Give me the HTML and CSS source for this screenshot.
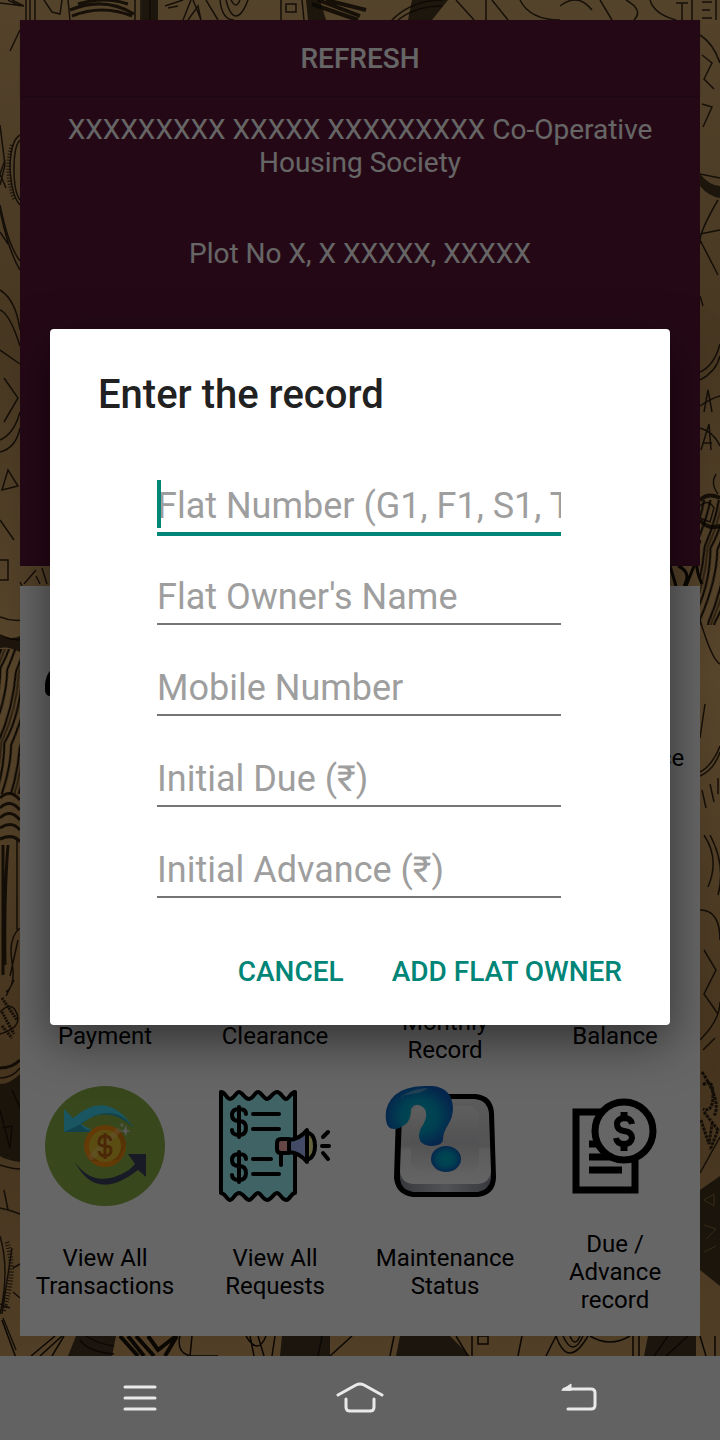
FILE: index.html
```html
<!DOCTYPE html>
<html lang="en">
<head>
<meta charset="utf-8">
<meta name="viewport" content="width=device-width, initial-scale=1">
<title>Enter the record</title>
<link rel="stylesheet" href="styles.css">
</head>
<body>
<div class="screen">
  <svg class="coins" viewBox="0 0 720 1356" preserveAspectRatio="xMidYMid slice" aria-hidden="true">
    <defs>
      <linearGradient id="gold" x1="0" y1="0" x2="0" y2="1">
        <stop offset="0" stop-color="#d3a86c"/><stop offset=".25" stop-color="#b38b55"/><stop offset=".5" stop-color="#dcae6e"/><stop offset=".8" stop-color="#ad824c"/><stop offset="1" stop-color="#c89c60"/>
      </linearGradient>
      <pattern id="folds" width="22" height="72" patternUnits="userSpaceOnUse" patternTransform="rotate(14)">
        <path d="M2 0Q8 36 2 72M8 0Q17 38 8 72M15 0Q22 30 15 72" fill="none" stroke="#1c1208" stroke-width="2"/>
        <path d="M5 0Q12 36 5 72" fill="none" stroke="#70512c" stroke-width="2"/>
      </pattern>
    </defs>
    <rect width="720" height="1356" fill="url(#gold)"/>
    <path d="M142 0h16v20h-16zM306 0h14l6 20h-18zM412 0h36l-16 20h-24zM0 636q12 4 20 0v16q-12-6-20-4z" fill="#1c1208" opacity=".75"/>
    <path d="M700 174q10 12 20 12v12q-12-2-20-12zM700 1190l20-14v110l-20-16zM0 1084q10 0 20-10v88q-14-2-20-6z" fill="#302414" opacity=".85"/>
    <rect y="649" width="20" height="145" fill="url(#folds)"/>
    <rect x="700" y="500" width="20" height="125" fill="url(#folds)"/>
    <g fill="none" stroke="#1c1208" stroke-width="1.5" opacity=".85">
      <path d="M0 3l24 3-12-6M8 0l12 6M26 0v20M35 0v20M30 0v20M44 0l8 12 8 2 2-14M68 0l2 20M135 0v20M141 0v20M150 0v20"/>
      <path d="M70 10q34-14 64 4M72 16q30-12 60 0M78 4q26-8 50 0" stroke-width="3"/>
      <path d="M165 6l18-6M168 8l10-2M183 20l8-20M188 20l10-14 3 14M206 0l12 20M193 0l8 20"/>
      <path d="M220 0q2 20 14 20M226 0q4 16 10 16t12-16M231 0q5 10 9 0M281 0v20M302 0l2 20M286 4h10v8h-10z"/>
      <path d="M318 0l42 16M326 0l40 10M312 4l46 16" stroke-width="4"/>
      <path d="M392 20q20-20 50-20M398 20q18-14 44-14M456 0l18 20M486 20V0M492 0l16 20M520 0q10 20 40 20M560 6q18-14 32 4M600 0l12 20M626 0q18 10 8 20M650 0q4 14 26 20M676 3h12M682 3v17M692 0v20M702 2h10M702 18h10M702 10h8M716 0v20"/>
      <path d="M20 30L10 51M0 125l5 40-5 20M0 205q8 40 20 56M0 210q8 40 20 60M0 232l8 12"/>
      <path d="M20 135q-10 6-10 34 2 28 10 36M20 140q-6 6-6 29t6 31M5 160l-5 14 6 14"/>
      <path d="M12 145q-8 26 2 54" stroke-width="4" stroke-dasharray="1 2"/>
      <path d="M0 290q16 10 20 40M0 310q10 4 20 36M0 350l20 14M4 378l14 20-14 24M0 440q14-6 20-28M0 452q16-4 20-24M8 470l-6 20 16-4zM0 520l14 20M0 560h8v20H0"/>
      <path d="M0 617q24 10 50-8M0 635q10 5 20 5M20 582l4 8M24 584l12-14M36 576l4 8M42 568l5 16"/>
      <path d="M0 798q10-10 20 2M0 808q10-10 20 2M0 818q10-10 20 2M0 828q12-8 20 2M0 839q14-6 20 3" stroke-width="3"/>
      <path d="M3 845v130M8 845q-4 50-3 120" stroke-width="3"/>
      <path d="M17 840v90M20 928q-12 10-8 34t-6 30M18 940q-4 18-8 36M14 980l-8 16M0 1012q12-12 17 2t-17 20"/>
      <path d="M2 998l15 22M2 1012l12 22M2 1026l10 12" stroke-width="3" stroke-dasharray="2 1"/>
      <path d="M0 1068q12 0 20-8" stroke-width="3"/>
      <path d="M0 1078q12 0 20-10M0 1110l10 38 2-22-10 2M12 1090l8 18M0 1165q12 4 20 4M0 1208q10 2 20 6M4 1190l4 20"/>
      <path d="M0 1236q10 34 0 78M12 1248l-10 66M13 1268l7-4M13 1292l7 6M10 1308l-10-4M3 1318l13 32"/>
      <path d="M7 1242q10 30-4 70" stroke-width="5" stroke-dasharray="1 2"/>
      <path d="M700 35q13 8 20 28M702 55l10 8-8 16 10 10M702 104l10 3-9 20M700 174l20 4M718 200q-20 34-18 44M700 234l20-4M700 240l18 35M700 296l3 10M700 372q14-6 20-28M700 380q16-8 20-24M704 412l4-22 4 22M700 406q12-8 20-10"/>
      <path d="M700 428q14 4 20 18M701 450l8-26 2 26M703 443h9M716 474q-6 10 2 20M700 506q8-8 14 2l-4 14-10-4"/>
      <path d="M700 500q8-8 20-2M700 520q8 10 20 6" stroke-width="4"/>
      <path d="M700 620q12 40 20 44M705 704l-5 34M700 772q12-6 20-26M700 776q14-6 20-24M702 790l4 18M710 784l4 18M718 778v16"/>
      <path d="M704 835q16 24 4 52M710 835q16 30 8 60M700 910q20 0 20 30M704 950l12 20-12 24 14 20M700 1040q20-20 20-38M703 1050l12-12M700 1173l20-36"/>
      <path d="M702 1072q20 30 12 44M703 1085q10-8 10 10t-10 14M704 1112l14 18-8 20M701 1120l8 24 3-20" stroke-width="3" stroke-dasharray="3 1"/>
    </g>
    <path d="M704 1200l10-6v12zM704 1225l12 4-10 10M704 1252l12-6" fill="none" stroke="#8b683b"/>
    <path d="M76 1336h40l-4 20H68zM282 1336h48v20h-50zM400 1336h50l20 20h-74zM648 1336h48v20h-52z" fill="#2e2416" opacity=".85"/>
    <path d="M120 1336l18 20M128 1336l16 20M136 1336l18 20M148 1336l10 14 18-14M165 1356l12-20" fill="none" stroke="#1c1208" stroke-width="4"/>
    <path d="M2 1320l14 38M31 1356l24-20M40 1356l22-20M52 1356l12-20M80 1340q8 12 34 14M86 1336q12 8 28 10M180 1336q-4 16 10 20h28M192 1336l-2 20M246 1336q12 20 20 0M250 1336l4 20M258 1336l6 20M275 1336l-3 20M322 1336l-4 20M352 1336l-22 20M394 1336l-4 20M456 1336l12 20M472 1336v20M478 1336h10v8h-10zM518 1356l4-20M546 1356l10-20M556 1336q12 34 32 0M563 1336q10 22 20 0M570 1336q5 12 10 0M590 1336q20 12 40 0M633 1336v20M639 1336v20M654 1356l14-20M666 1356l22-20M700 1336l6 20M715 1336v20" fill="none" stroke="#1c1208" stroke-width="1.5"/>
    <path d="M670 566l6 20M678 566q14 6 6 20M694 566l-8 20M700 540q-8 24 2 44" fill="none" stroke="#1c1208" stroke-width="3"/>
  </svg>

  <header class="society">
    <button class="refresh" type="button">REFRESH</button>
    <p class="society-line">XXXXXXXXX XXXXX XXXXXXXXX Co-Operative Housing Society</p>
    <p class="society-line address">Plot No X, X XXXXX, XXXXX</p>
  </header>

  <main class="menu">
    <div class="tile">
      <svg class="tile-icon" viewBox="0 0 120 120" aria-hidden="true"><path d="M20 77Q2 80 0 98v7q1 5 5 5h15z"/></svg>
    </div>
    <div class="tile"></div>
    <div class="tile"></div>
    <div class="tile"><span class="tile-icon"></span><span class="tile-label">Maintenance<br>&nbsp;</span></div>

    <div class="tile"><span class="tile-icon"></span><span class="tile-label">&nbsp;<br>Payment</span></div>
    <div class="tile"><span class="tile-icon"></span><span class="tile-label">&nbsp;<br>Clearance</span></div>
    <div class="tile"><span class="tile-icon"></span><span class="tile-label">&nbsp;<br>Monthly<br>Record</span></div>
    <div class="tile"><span class="tile-icon"></span><span class="tile-label">&nbsp;<br>Balance</span></div>

    <a class="tile" href="#transactions">
      <svg class="tile-icon" viewBox="0 0 120 120" aria-hidden="true">
        <circle cx="60" cy="60" r="60" fill="#8cb148"/>
        <path d="M19 23l9 9Q62 2 89 42 67 14 36 38l14 8H19z" fill="#41d8f4"/>
        <path d="M19 46l17-8Q67 14 89 42 63 17 35 38l5 5 10 3z" fill="#2ba9c4"/>
        <path d="M30 76Q50 105 84 84l6-6-7-10h18v23l-8-7Q51 117 30 76z" fill="#3c4460"/>
        <circle cx="60" cy="60" r="21" fill="#f99310"/>
        <path d="M75 45a21 21 0 0 1 6 14L74 74 45 75z" fill="#d97f10"/>
        <circle cx="60" cy="60" r="16" fill="#e4c02c"/>
        <path d="M43 70l30-29 4 4-30 30z" fill="#ffd9a0" opacity=".35"/>
        <path d="M66 55q-1-5-6-5t-6 5 6 5 6 5-6 5-6-5M60 47v26" fill="none" stroke="#b86414" stroke-width="3"/>
        <path d="M81 39l1 5 4 1-4 1-1 4-2-4-4-1 4-1z" fill="#ddd"/>
        <path d="M77 37v4M75 39h4" fill="none" stroke="#ddd"/>
      </svg>
      <span class="tile-label">View All Transactions</span>
    </a>
    <a class="tile" href="#requests">
      <svg class="tile-icon" viewBox="0 0 120 120" aria-hidden="true">
        <g stroke="#000" stroke-width="4" stroke-linejoin="round" stroke-linecap="round" fill="none">
          <path d="M6 6c5 0 5 7 9 7s6-7 9-7 6 7 10 7 6-7 9-7 6 7 9 7 6-7 10-7 6 7 9 7 5-7 9-7v101c-4 0-5 7-9 7s-6-7-9-7-6 7-10 7-6-7-9-7-6 7-9 7-6-7-10-7-6 7-9 7-5-7-9-7z" fill="#a0faff"/>
          <path d="M31 28q0-5-7-5t-7 6 7 6 7 7-7 7-7-5M24 21v30M31 73q0-5-7-5t-7 6 7 6 7 7-7 7-7-5M24 66v30M38 28h26M38 43h26M38 73h18M38 88h26M66 68v11"/>
          <path d="M92 47h2q6 3 6 13t-6 13h-2z" fill="#fff89d"/>
          <path d="M74 54q11-1 18-10v32q-7-9-18-10z" fill="#a5b9ff"/>
          <path d="M74 53h-8q-4 0-4 4v6q0 4 4 4h8z" fill="#ffafac"/>
          <path d="M108 51l5-5M107 60h7M108 67l5 6"/>
        </g>
      </svg>
      <span class="tile-label">View All Requests</span>
    </a>
    <a class="tile" href="#status">
      <svg class="tile-icon" viewBox="0 0 120 120" aria-hidden="true">
        <defs>
          <linearGradient id="face" x1="0" y1="0" x2="0" y2="1"><stop offset="0" stop-color="#e4e4e4"/><stop offset=".55" stop-color="#d0d0d0"/><stop offset=".6" stop-color="#e8e8e8"/><stop offset="1" stop-color="#fafafa"/></linearGradient>
          <linearGradient id="well" x1="0" y1="0" x2="0" y2="1"><stop offset="0" stop-color="#eee"/><stop offset=".55" stop-color="#ccccd0"/><stop offset="1" stop-color="#f0f0f0"/></linearGradient>
          <linearGradient id="edge"><stop offset="0" stop-color="#8a8f98"/><stop offset=".5" stop-color="#c9ced6"/><stop offset="1" stop-color="#8a8f98"/></linearGradient>
          <radialGradient id="mark"><stop offset="0" stop-color="#00b4c8"/><stop offset=".55" stop-color="#00a0cc"/><stop offset="1" stop-color="#0e62c0"/></radialGradient>
        </defs>
        <path d="M31 8h60q17 2 18 19l2 65q-1 17-18 19H28q-17-2-19-19l2-65q2-17 20-19z"/>
        <path d="M15 85h91v8q-2 11-13 13H28q-12-2-13-13z" fill="url(#edge)"/>
        <path d="M32 13h57q14 1 15 15l2 57q-1 12-13 13H28q-12-1-13-13l2-57q1-14 15-15z" fill="url(#face)"/>
        <rect x="26" y="20" width="68" height="66" rx="11" fill="url(#well)"/>
        <path d="M1 34Q-1 19 10 9T48 0q19 2 20 22 0 9-5 17t-5 14q0 7-13 7-10-1-11-9 0-7 4-12 6-11 1-17-8-7-13 1 0 9-4 14-7 6-13 6Q2 43 1 34z" fill="url(#mark)"/>
        <path d="M8 21Q18 3 43 2q-5 5-17 6T8 21z" fill="#fff" opacity=".3"/>
        <ellipse cx="61" cy="73" rx="15" ry="13" fill="url(#mark)"/>
      </svg>
      <span class="tile-label">Maintenance Status</span>
    </a>
    <a class="tile" href="#due">
      <svg class="tile-icon" viewBox="0 0 120 120" aria-hidden="true">
        <g fill="none" stroke="#000" stroke-width="7">
          <path d="M46 26H21v78h59V74M34 58h14M34 71h22M34 84h33"/>
          <circle cx="69" cy="45" r="29" fill="#fff"/>
          <path d="M77 38q-1-6-8-6-7 1-7 6 0 6 7 7 8 1 8 7-1 6-8 6-7 0-8-6" stroke-width="6"/>
          <path d="M69 26v6M69 58v7"/>
        </g>
      </svg>
      <span class="tile-label">Due / Advance record</span>
    </a>
  </main>

  <div class="scrim">
    <form class="dialog" role="dialog" aria-labelledby="dialog-title">
      <h1 class="dialog-title" id="dialog-title">Enter the record</h1>
      <div class="fields">
        <div class="field active"><input type="text" aria-label="Flat Number" placeholder="Flat Number (G1, F1, S1, T1)"><span class="caret"></span></div>
        <div class="field"><input type="text" aria-label="Flat Owner's Name" placeholder="Flat Owner's Name"></div>
        <div class="field"><input type="tel" aria-label="Mobile Number" placeholder="Mobile Number"></div>
        <div class="field"><input type="text" aria-label="Initial Due" placeholder="Initial Due (₹)"></div>
        <div class="field"><input type="text" aria-label="Initial Advance" placeholder="Initial Advance (₹)"></div>
      </div>
      <div class="actions">
        <button type="button">CANCEL</button>
        <button type="button">ADD FLAT OWNER</button>
      </div>
    </form>
  </div>
</div>

<nav class="system-nav" aria-label="System">
  <button type="button" aria-label="Recent apps"><svg viewBox="0 0 48 36"><path d="M9 7h30M9 18h30M9 29h30"/></svg></button>
  <button type="button" aria-label="Home"><svg viewBox="0 0 48 36"><path d="M2 15L20 5q4-2 8 0l18 10M10 19v8q0 4 4 4h20q4 0 4-4v-8"/></svg></button>
  <button type="button" aria-label="Back"><svg viewBox="0 0 48 36"><path d="M8 9h27q4 0 4 4v12q0 4-4 4H12"/><path class="solid" d="M6 10l9-6v6z"/></svg></button>
</nav>
</body>
</html>
```
FILE: styles.css
```css
* { box-sizing: border-box; }
body { margin: 0; min-height: 100vh; display: flex; flex-direction: column; font-family: Roboto, "Noto Sans", sans-serif; color: #000; }
button { border: 0; background: none; font: inherit; color: inherit; cursor: pointer; }
.screen { position: relative; flex: 1; display: flex; flex-direction: column; gap: 20px; padding: 20px; overflow: hidden; }
.coins { position: absolute; inset: 0; width: 100%; height: 100%; }
.society { position: relative; flex: 1; min-height: 546px; background: #5c1637; color: #fff; text-align: center; }
.refresh { display: block; width: 100%; height: 76px; font-size: 28px; font-weight: 500; box-shadow: 0 1px 2px rgba(0, 0, 0, .2); }
.society-line { margin: 17px 16px 0; font-size: 28px; line-height: 33px; }
.address { margin-top: 58px; }
.menu { position: relative; display: grid; grid-template-columns: repeat(4, 1fr); grid-auto-rows: 250px; background: #fff; }
.tile { display: flex; flex-direction: column; align-items: center; color: inherit; text-decoration: none; }
.tile-icon { width: 120px; height: 120px; flex: none; }
.tile-label { flex: 1; display: flex; flex-direction: column; justify-content: center; padding: 2px 12px 0; font-size: 24px; line-height: 28px; text-align: center; }
.scrim { position: absolute; inset: 0; display: flex; align-items: center; justify-content: center; padding: 0 50px 2px; background: rgba(0, 0, 0, .6); }
.dialog { width: 100%; padding: 42px 0 18px; border-radius: 4px; background: #fff; box-shadow: 0 16px 48px rgba(0, 0, 0, .5); }
.dialog-title { margin: 0 48px 61px; font-size: 40px; line-height: 48px; font-weight: 500; color: #212121; }
.fields { display: grid; gap: 35px; margin: 0 109px 0 107px; }
.field { position: relative; height: 56px; }
.field input { display: block; width: 100%; height: 54px; padding: 0; border: 0; border-bottom: 2px solid #757575; border-radius: 0; outline: 0; background: none; font: 36px Roboto, "Noto Sans", sans-serif; color: #212121; }
.field input::placeholder { color: #9e9e9e; opacity: 1; }
.field.active input { height: 56px; border-bottom: 4px solid #008577; }
.caret { position: absolute; left: 0; top: 0; width: 4px; height: 48px; background: #008577; }
.actions { display: flex; justify-content: flex-end; gap: 16px; margin-top: 35px; padding: 0 32px; }
.actions button { height: 72px; padding: 0 16px; font-size: 28px; font-weight: 500; color: #008577; }
.system-nav { display: flex; height: 84px; padding: 0 30px; background: #626262; }
.system-nav button { flex: 1; display: flex; align-items: center; justify-content: center; padding: 0; }
.system-nav svg { width: 48px; height: 36px; fill: none; stroke: #e9e9e9; stroke-width: 3; stroke-linecap: round; stroke-linejoin: round; }
.system-nav .solid { fill: #e9e9e9; stroke-width: 1; }
```
